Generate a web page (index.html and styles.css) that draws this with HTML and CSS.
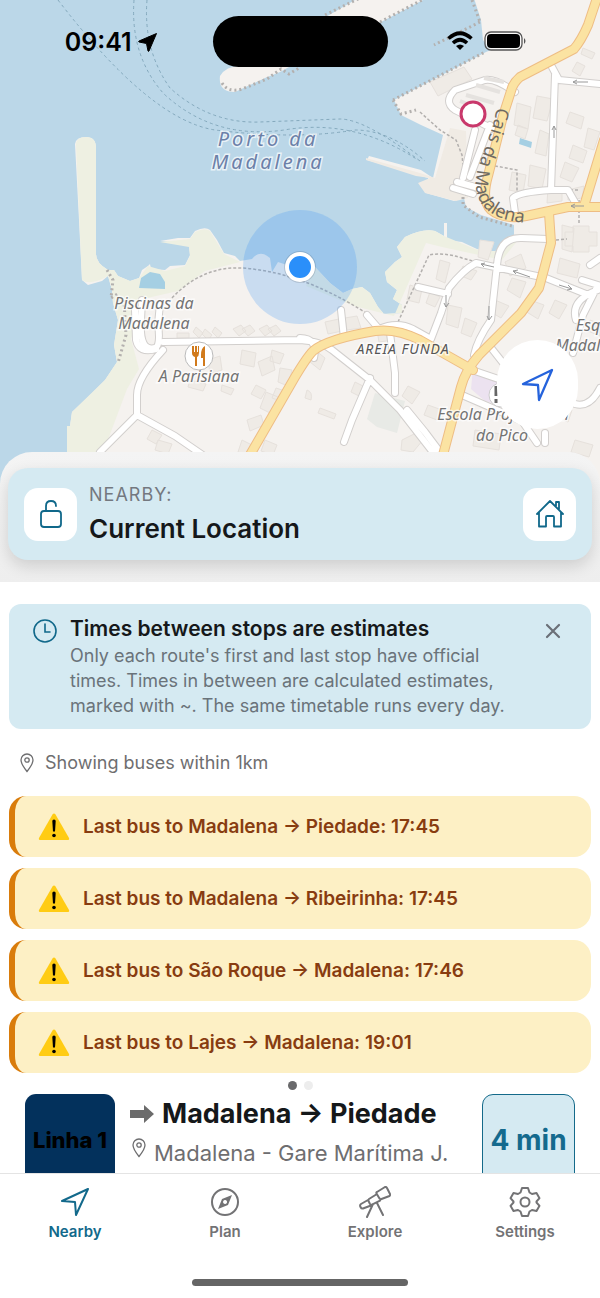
FILE: index.html
```html
<!DOCTYPE html>
<html lang="en">
<head>
    <meta charset="UTF-8">
    <meta name="viewport" content="width=device-width, initial-scale=1.0">
    <title>Nearby buses</title>
    <link rel="stylesheet" href="styles.css">
</head>
<body>
    <div class="app">
        <section class="map" aria-label="Map">
            <svg class="map-canvas" viewBox="0 0 600 500" preserveAspectRatio="xMidYMin slice">
                <!-- Land -->
                <path class="land" d="M67 500V426h3l2-14 18-17 15-15 12-18-3-17 4-25-5-17-1-13-4-14-6 5-14 4-6-5-3-60-4-76Q76 137 86 137T96 148v106q0 9 12 16l6 0 4 6 12 5 9-3 3-8 6-4 2-2 1 5 14 1 5-4 15-1 5-10-1-9-6-3-23-2 18-3 12 0 5-7q10-5 15-1l7 10 7 13 11 3 5 5 12-2q8-10 18-1l2 14 6-10 12 4 25 1 15 16 13 10 9-4 10-2 8 6 8 14 6 7 18-1v-8l-9-6 4-9-10-8-2-10 10-10 7-5-5-10 8-10q18-9 30-6l9 5V223l3 0v17l15 2 15 7q12 4 25 1l12-7V225l-33-10-15-8-2-9-10 3-28-8-7-10 10-1-1-4-61-18 2-4 52 14 12 8 3-13 7-30-22-10-20-10-7-15 92-48 5-2-8-10-2-20-8-25H600V500Z"/>
                <path class="land" d="M220 76q6-10 20-10L300 32l55-32h68l-42 22-47 20-54 30-15 6-30 14q-17 0-15-16Z"/>
                <path class="shore" d="M76 145Q76 137 86 137T96 148v106q0 9 12 16l6 0 4 6 12 5 9-3 9-12 17 5 20-5 5-10-1-9-29-5 30-3 5-7q10-5 15-1l14 23 16 8-35 9-27 20-35 8-12 40 8 30-12 20-30 80H67V426h3l2-14 33-32 12-18-3-17 4-25-5-17-1-13-4-14q-18 10-26 4Z"/>
                <path class="shore" d="M315 267l15 16 13 10 9-4 10-2 8 6 8 14 6 7 18-1v-8l-9-6 4-9-10-8-2-10 10-10 7-5-5-10 8-10q18-9 30-6l9 5 31 13q12 4 25 1l12-7 0-5 10-3-20 25-60-13-16-4-32 73-40-10-48-20Z"/>
                <path class="water" d="M139 288l2-10 9-6 10 2 5 8v7Z"/>
                <path class="pier" d="M366 158l54 15 15 5 15-50 16 3 2 67-12 3-31-8-7-10 12-5-14-2-50-16Z"/>
                <path class="lot" d="M375 393l30 8-8 32-20-6-10-8Z"/>
                <path class="school" d="M473 368l24 8 6 30-18-5-14-12Z"/>
                <path class="water" d="M520 138l12 4-1 6-12-4Z"/>

                <!-- Buildings -->
                <path class="building" d="M430 82l34-15 8 12-34 17ZM517 103l14 4-3 22-14-4ZM537 96l16 3-6 22-14-3ZM518 125l10 4-3 10-10-4ZM540 130l9 4-3 22-11-3ZM512 172l14 3-3 18-14-3ZM530 165l16 4-4 20-14-3ZM570 112l14 5-3 12-15-6ZM588 128l12 4-6 18-10-3ZM573 145l14 6-4 12-14-5ZM565 162l14 6-7 14-12-5ZM583 48l12 5-3 6-11-5ZM577 62l8 4-5 10-8-5ZM568 190l16-4-2 12-14 2ZM548 188l14-1v14l-15 2ZM562 225l12 3-2 24-10-3ZM565 232h8v-6h16v6h8v14h-8v6h-16v-6h-8ZM560 258l20 6-3 14-20-5ZM440 260l10 3-5 20-9-4ZM463 266l14 5-6 9-12-5ZM480 240l14 2-6 18-10-3ZM505 262l16-8 5 14-16 8ZM512 278l14 4-6 16-13-8ZM495 300l14 6-8 12-12-7ZM410 285l12 4-3 14-12-3ZM430 292l10 5-5 10-9-4ZM448 305l14 3-4 20-12-4ZM465 318l12 5-6 14-10-4ZM377 330l12-2 4 12-14 2ZM345 318l12-2 4 12-14 2ZM315 350l10 8-5 12-10-8ZM355 382l8 4-4 10-8-4ZM408 386l12 6-8 12-10-8ZM320 408l16 6-2 5-16-6ZM307 390q6 2 4 10l-6-2ZM402 440l16-8 5 8-10 12-12-2ZM428 405l14 5-5 10-13-5ZM475 430l26 4-2 16-26-4ZM560 405l12 5-4 12-12-5ZM575 440l18 5-4 12-18-5ZM530 300l14 5-6 14-13-8ZM555 300l12 5-8 14-10-6Z"/>
                <path class="building" d="M196 327l7 6-4 5-6-6ZM205 329l7 6-4 5-6-6ZM215 327l7 6-4 5-6-6ZM233 329l8-4 5 6-7 5ZM242 329l8-4 5 6-7 5ZM259 329l8-4 5 6-7 5ZM268 329l8-4 5 6-7 5ZM177 333h12v5h-12ZM242 350l14 3-2 14-14-3ZM258 362l14-6 3 14-13 6ZM272 350l12 4-4 10-10-3ZM280 368l12 2-4 16-10-4ZM256 385l10 5-5 9-10-5ZM266 392l12 5-8 16-10-5ZM276 388l12 4-5 10-11-4ZM247 420l14-5 3 10-14 6ZM242 440l10 5-4 10-10-3ZM152 430l10 5-6 9-9-5ZM158 440l14 4-4 10-13-4ZM190 380l16 4-3 7-15-4ZM208 360l12-4 2 14-12 4ZM222 385l12 4-3 6-10-4ZM325 322l14-3 3 12-14 3ZM590 320l10 4v12l-12-5ZM265 440l12 5-4 10-12-4Z"/>

                <!-- Footpaths and ferry lines -->
                <path class="footpath" d="M172 298q30-32 70-30 60 4 124 45M398 322l31-67q14-3 33 3l18 5M490 165l27 5v28M556 240l11-1M579 200v25M560 190h20M420 112l20 18 16 10 6 15 4 42"/>
                <path class="wall" d="M107 270l6 10-2 18 8-5M124 300l2 35-8 28M222 83q6 10 20 6l25-10 14-10 8 5 10-6M325 15l35-17M380 22l42-22M393 100l8 14 15-4M393 100l92-48M480 22l-46 23M472 0l8 22M463 197v8l16 12 33 9"/>
                <path class="ferry" d="M58 0q92 120 157 130 80 10 140 0 35 0 70 31M134 0q-4 56 30 94 50 46 120 36 70-12 134 30M147 0q-4 50 23 88 40 36 90 34l80-3q25 0 80 42"/>

                <!-- Streets -->
                <g class="road-edge">
                    <path id="streets" d="M142 300l-1 20q-2 32 14 28 6-2 3-24l2-20M135 310l1 30q3 14 20 9M163 350q-26 28-26 45l0 20-37 37M163 342l137-2q20 1 32 10l38 30 30 30 35 45M137 415l38 21 35 24M300 338q18 0 14 20M341 310l3 28M367 315l12 14q18-8 34 0l18 10 10-26 8-25q14-18 27-25l70 15 45 18M418 287l30 7M390 333l5 40v20M370 378l-18 42-8 22M497 265l-6 55q-14 20-17 35M497 265q2-28 25-27l26 1M515 92q-20-14-30-12l-30 10q-12 12 0 20l40 20M555 75l-4 115q-32 2-38 8l2 15M551 190h17l8 14M552 67l7 13 41 4M475 130l-12 48M490 125l-20 52M457 182l22 6M453 188l20 6M472 370l50 17-30-38M462 395l60 26 15 22M583 315l15-30-16-5M583 315l-10 38M590 265l10-7M598 290q-28 10-22 30M440 452l-15-20-18-22M575 404q15 4 25-16M545 433v10"/>
                </g>
                <use href="#streets" class="road-fill"/>
                <g class="main-edge">
                    <path id="mains" d="M598-5l-10 30q-7 16-14 24l-54 28q-7 6-9 14l-8 25-15 60q-7 25 3 34 12 10 35 6l42-9h35M604 140l-20 66M549 213l2 30-12 45-18 25-42 42q-14 16-18 32l-18 68M473 370l-53-30q-24-12-45-9-48 8-62 20-6 6-18 26l-48 83"/>
                </g>
                <use href="#mains" class="main-fill"/>
                <path class="parking" d="M484 78l20 4M476 85l24 7M466 95l28 8M460 101l10 4"/>
                <path class="oneway" d="M588 82h-15m4-2-4 2 4 2M554 138v-12m-2 4 2-4 2 4M584 206h-13m4-2-4 2 4 2M494 267l-13-3m4-1-4 1 3 3M530 277l-17-6m5-1-5 1 3 3M559 285l13 4m-4-4 4 4-5 1M446 295v12m-2-4 2 4 3-4M489 306v14m-2-4 2 4 3-4"/>

                <!-- Place names -->
                <g class="label label-sea">
                    <text x="268" y="146">Porto da</text>
                    <text x="268" y="169">Madalena</text>
                </g>
                <g class="label">
                    <text x="154" y="309">Piscinas da</text>
                    <text x="154" y="329">Madalena</text>
                    <text x="199" y="382">A Parisiana</text>
                    <text x="588" y="331">Esq</text>
                    <text x="591" y="351">Madalena</text>
                    <text x="503" y="420">Escola Profissional</text>
                    <text x="502" y="441">do Pico</text>
                </g>
                <text class="label label-area" x="403" y="354">AREIA FUNDA</text>
                <path id="cais" fill="none" d="M497 107C490 145 474 165 476 188 480 215 503 224 545 223"/>
                <text class="label-street"><textPath href="#cais">Cais da Madalena</textPath></text>

                <!-- Markers -->
                <circle cx="199" cy="356" r="14" fill="#fff" stroke="#bbb"/>
                <path d="M192 346v7q0 3 3 4v9h2v-9q2-1 2-4v-7h-1v6h-1v-6h-2v6h-1v-6ZM205 346q-4 2-4 9v3h2v8h2Z" fill="#d17a1c"/>
                <circle cx="501" cy="395" r="12" fill="#fff" stroke="#ccc"/>
                <path d="M496 386v10m0 3v4" stroke="#666" stroke-width="3"/>
                <circle cx="473" cy="114" r="12" fill="#fff" stroke="#c9386b" stroke-width="3"/>
                <circle cx="300" cy="267" r="57" fill="#2e8df7" fill-opacity=".22"/>
                <circle cx="300" cy="267" r="16" fill="#000" fill-opacity=".12"/>
                <circle cx="300" cy="267" r="13" fill="#2a8ffa" stroke="#fff" stroke-width="4"/>
            </svg>

            <header class="status-bar">
                <div class="status-time">
                    <span>09:41</span>
                    <svg width="20" height="20" viewBox="0 0 20 20"><path d="M18.500 1.500 1 9q-.8.800 0 1l7.500 1.500L10 19q.5.800 1 0Z" stroke="#000" stroke-linejoin="round"/></svg>
                </div>
                <div class="island"></div>
                <div class="status-icons">
                    <svg width="26" height="20" viewBox="0 0 26 20" fill="none" stroke="#000" stroke-width="3.600">
                        <path d="M1.500 7.500q11.500-10.500 23 0M6 12q7-6.500 14 0"/>
                        <path d="M13 19l-4-4q4-3 8 0Z" fill="#000" stroke="none"/>
                    </svg>
                    <svg width="43" height="20" viewBox="0 0 43 20">
                        <rect x="1" y="1" width="37" height="18" rx="6" fill="#fff" fill-opacity=".6" stroke="#555" stroke-width="1.300"/>
                        <rect x="3" y="3" width="33" height="14" rx="4"/>
                        <path d="M40 7q3 3 0 6Z" fill="#555"/>
                    </svg>
                </div>
            </header>

            <button class="locate" type="button" aria-label="Show my position">
                <svg width="36" height="36" viewBox="0 0 36 36" fill="none" stroke="#2563dc" stroke-width="2.300" stroke-linejoin="round"><path d="M32 3 3 17l15 1 1 15Z"/></svg>
            </button>
        </section>

        <section class="sheet">
            <div class="place">
                <button class="place-button" type="button" aria-label="Lock location">
                    <svg width="32" height="32" viewBox="0 0 32 32" fill="none" stroke="#10688a" stroke-width="1.800" stroke-linecap="round"><rect x="6" y="13" width="20" height="16" rx="3"/><path d="M11 13V8q0-5 5-5t5 5"/></svg>
                </button>
                <div class="place-text">
                    <p class="place-label">NEARBY:</p>
                    <h1>Current Location</h1>
                </div>
                <button class="place-button" type="button" aria-label="Home">
                    <svg width="32" height="32" viewBox="0 0 32 32" fill="none" stroke="#10688a" stroke-width="1.800" stroke-linecap="round" stroke-linejoin="round"><path d="M3 16 16 3l13 13M5 14v14.500h7V19q0-1 1-1h6q1 0 1 1v9.500h7V14M22 8V4h3v7"/></svg>
                </button>
            </div>
        </section>

        <main class="content">
            <section class="notice">
                <svg class="notice-icon" width="24" height="24" viewBox="0 0 24 24" fill="none" stroke="#10688a" stroke-width="1.600" stroke-linecap="round"><circle cx="12" cy="12" r="11"/><path d="M12 5v8h5"/></svg>
                <div class="notice-text">
                    <h2>Times between stops are estimates</h2>
                    <p>Only each route's first and last stop have official times. Times in between are calculated estimates, marked with ~. The same timetable runs every day.</p>
                </div>
                <button class="notice-close" type="button" aria-label="Close">
                    <svg width="16" height="16" viewBox="0 0 16 16" stroke="#6b7078" stroke-width="2.200" stroke-linecap="round"><path d="M2 2l12 12M14 2 2 14"/></svg>
                </button>
            </section>

            <p class="range">
                <svg width="14" height="20" viewBox="0 0 14 20" fill="none" stroke="#6e6e70" stroke-width="1.300"><path d="M7 18.500Q1 11 1 7a6 6 0 0 1 12 0q0 4-6 11.500Z"/><circle cx="7" cy="7" r="2.200"/></svg>
                Showing buses within 1km
            </p>

            <svg class="symbols" aria-hidden="true">
                <symbol id="warning" viewBox="0 0 32 28">
                    <path d="M14.500 1.500q1.500-2 3 0L31 25q.6 2-1 2H2q-1.600 0-1-2Z" fill="#ffcc14"/>
                    <path d="M14.300 8q0-1.600 1.700-1.600T17.700 8L17 18.500h-2Z"/><circle cx="16" cy="22.500" r="1.800"/>
                </symbol>
            </svg>
            <ul class="alerts">
                <li class="alert"><svg width="32" height="28"><use href="#warning"/></svg>Last bus to Madalena → Piedade: 17:45</li>
                <li class="alert"><svg width="32" height="28"><use href="#warning"/></svg>Last bus to Madalena → Ribeirinha: 17:45</li>
                <li class="alert"><svg width="32" height="28"><use href="#warning"/></svg>Last bus to São Roque → Madalena: 17:46</li>
                <li class="alert"><svg width="32" height="28"><use href="#warning"/></svg>Last bus to Lajes → Madalena: 19:01</li>
            </ul>

            <div class="departures">
                <div class="dots"><span class="dot active"></span><span class="dot"></span></div>
                <article class="departure">
                    <div class="line-badge">Linha 1</div>
                    <div class="departure-text">
                        <h3>
                            <svg width="24" height="20" viewBox="0 0 24 20" fill="#6b6b6b"><path d="M0 6h14V1l10 9-10 9v-5H0Z"/></svg>
                            Madalena → Piedade
                        </h3>
                        <p>
                            <svg width="14" height="20" viewBox="0 0 14 20" fill="none" stroke="#6e6e70" stroke-width="1.300"><path d="M7 18.500Q1 11 1 7a6 6 0 0 1 12 0q0 4-6 11.500Z"/><circle cx="7" cy="7" r="2.200"/></svg>
                            Madalena - Gare Marítima J.
                        </p>
                    </div>
                    <div class="wait">4 min</div>
                </article>
            </div>
        </main>

        <footer class="bottom">
            <nav class="tabs">
                <a class="tab current" href="#nearby">
                    <svg width="32" height="32" viewBox="0 0 32 32"><path d="M29 3 3 15l13 1 1 13Z"/></svg>
                    Nearby
                </a>
                <a class="tab" href="#plan">
                    <svg width="32" height="32" viewBox="0 0 32 32"><circle cx="16" cy="16" r="13"/><path fill="#737375" fill-rule="evenodd" stroke="none" d="M23 9l-4 10-10 4 4-10ZM16 14a2 2 0 1 0 .1 0Z"/></svg>
                    Plan
                </a>
                <a class="tab" href="#explore">
                    <svg width="32" height="32" viewBox="0 0 32 32"><path d="M18 6l8-5q1-.5 2 1l3 6q.5 1-.5 2l-8 3q-1 .5-2-.5l-3-5Q17 6.500 18 6ZM18 8l-8 5q-1 .7-.5 2l1.500 3q.7 1 2 .6l8-4M9 14l-7 4q-1.500 1-.5 3t2.500 1.500l8-3M14 18 8 31M18 17l6 12"/></svg>
                    Explore
                </a>
                <a class="tab" href="#settings">
                    <svg width="32" height="32" viewBox="0 0 32 32"><path d="M13 2h6l1.500 4.500 2.500 1.500 4.500-1 3 5.200-3 3.300v1l3 3.300-3 5.200-4.500-1-2.500 1.500L19 30h-6l-1.500-4.500L9 24l-4.500 1-3-5.200 3-3.300v-1l-3-3.300 3-5.200L9 8l2.500-1.500Z"/><circle cx="16" cy="16" r="4.500"/></svg>
                    Settings
                </a>
            </nav>
            <div class="home-indicator"></div>
        </footer>
    </div>
</body>
</html>
```
FILE: styles.css
```css
/* General Reset */
* {
    box-sizing: border-box;
    margin: 0;
    padding: 0;
}

body {
    font-family: Inter, "Liberation Sans", sans-serif;
    background-color: #fff;
    color: #15181a;
}

button {
    border: none;
    cursor: pointer;
    display: flex;
    align-items: center;
    justify-content: center;
}

svg {
    display: block;
    flex: none;
}

.symbols {
    position: absolute;
    width: 0;
    height: 0;
}

.app {
    display: flex;
    flex-direction: column;
    height: 100vh;
}

/* Map */
.map {
    position: relative;
    flex: none;
    height: 500px;
    background-color: #bbd7e8;
    overflow: hidden;
}

.map-canvas {
    width: 100%;
    height: 100%;
}

.land { fill: #f5f2ef; }
.shore { fill: #eef0e2; }
.water { fill: #a5cfe3; }
.pier { fill: #f0ebe4; }
.lot { fill: #e8eae6; }
.school { fill: #ece2f0; }

.building {
    fill: #efebe6;
    stroke: #e6e1dc;
}

.footpath, .wall, .ferry, .oneway {
    fill: none;
    stroke: #b3b0ae;
    stroke-width: 1.5;
    stroke-dasharray: 3 2;
}

.wall {
    stroke-width: 3;
    stroke-dasharray: 2 3;
}

.ferry {
    stroke: #84a9bd;
    stroke-width: 1;
    stroke-dasharray: 3 3;
}

.oneway {
    stroke: #999;
    stroke-width: 1;
    stroke-dasharray: none;
}

.road-edge, .road-fill, .main-edge, .main-fill {
    fill: none;
    stroke-linecap: round;
    stroke-linejoin: round;
}

/* Inherited by the path inside the group, and by the one <use> draws */
.road-edge {
    stroke: #d2cfcd;
    stroke-width: 8;
}

.road-fill {
    stroke: #fff;
    stroke-width: 6;
}

.main-edge {
    stroke: #eebd84;
    stroke-width: 10;
}

.main-fill {
    stroke: #fbe3a2;
    stroke-width: 8;
}

.parking {
    fill: none;
    stroke: #e5e2df;
    stroke-width: 4;
}

.label {
    font-family: "Noto Sans", sans-serif;
    font-style: italic;
    font-size: 16px;
    text-anchor: middle;
    fill: #737373;
    stroke: #fff;
    stroke-opacity: .7;
    stroke-width: 3px;
    paint-order: stroke;
}

.label-sea {
    font-size: 20px;
    letter-spacing: 3px;
    fill: #6c80a8;
}

.label-area {
    font-size: 14px;
    letter-spacing: 1px;
    fill: #555;
}

.label-street {
    font-family: "Noto Sans", sans-serif;
    font-size: 18px;
    fill: #6f6a62;
}

.locate {
    position: absolute;
    right: 22px;
    top: 340px;
    width: 81px;
    height: 89px;
    border-radius: 41px;
    background-color: #fff;
}

/* Status bar */
.status-bar {
    position: absolute;
    top: 16px;
    left: 0;
    right: 0;
    display: grid;
    grid-template-columns: 1fr 175px 1fr;
    align-items: center;
}

.status-time, .status-icons {
    display: flex;
    align-items: center;
    justify-content: center;
    gap: 6px;
    font-size: 25px;
    font-weight: 600;
    color: #000;
}

.status-time {
    padding-left: 10px;
}

.status-icons {
    gap: 11px;
    padding-right: 14px;
    padding-bottom: 2px;
}

.island {
    height: 51px;
    border-radius: 26px;
    background-color: #000;
}

/* Sheet with the current place */
.sheet {
    position: relative;
    flex: none;
    margin-top: -48px;
    padding: 16px 8px 22px;
    border-radius: 32px 32px 0 0;
    background: linear-gradient(#f4f4f4, #eeeeee);
    overflow: hidden;
}

.place {
    display: flex;
    align-items: center;
    gap: 12px;
    height: 92px;
    padding: 0 16px;
    border-radius: 20px;
    background-color: #d5eaf2;
    box-shadow: 0 6px 16px rgba(0, 0, 0, 0.14);
}

.place-button {
    flex: none;
    width: 53px;
    height: 53px;
    border-radius: 14px;
    background-color: #fff;
}

.place-text {
    flex: 1;
    padding-top: 4px;
}

.place-label {
    font-size: 18px;
    line-height: 26px;
    letter-spacing: 1px;
    color: #74787f;
}

h1 {
    font-size: 26px;
    line-height: 42px;
    font-weight: 600;
}

/* Scrolling list */
.content {
    flex: 1;
    min-height: 0;
    padding: 22px 9px 0;
    overflow: hidden;
}

.notice {
    display: flex;
    align-items: flex-start;
    padding: 11px 24px 11px;
    border-radius: 12px;
    background-color: #d5eaf2;
}

.notice-icon {
    margin-top: 4px;
}

.notice-text {
    flex: 1;
    padding: 0 12px 0 13px;
}

h2 {
    font-size: 21px;
    line-height: 28px;
    font-weight: 600;
}

.notice p {
    font-size: 18px;
    line-height: 25px;
    color: #6a737a;
}

.notice-close {
    width: 28px;
    height: 32px;
    background: none;
}

.range {
    display: flex;
    align-items: center;
    gap: 11px;
    padding: 0 11px;
    height: 67px;
    font-size: 18px;
    color: #6e6e70;
}

.alerts {
    display: grid;
    gap: 11px;
    list-style: none;
}

.alert {
    display: flex;
    align-items: center;
    gap: 13px;
    height: 61px;
    padding-left: 23px;
    border-left: 6px solid #d97c0b;
    border-radius: 17px;
    background-color: #fdf0c5;
    font-size: 19px;
    font-weight: 600;
    color: #883c10;
}

.departures {
    padding: 8px 16px 0;
}

.dots {
    display: flex;
    justify-content: center;
    gap: 7px;
}

.dot {
    width: 9px;
    height: 9px;
    border-radius: 50%;
    background-color: #ededed;
}

.dot.active {
    background-color: #69696b;
}

.departure {
    display: flex;
    margin-top: 4px;
}

.line-badge, .wait {
    flex: none;
    display: flex;
    align-items: center;
    justify-content: center;
    width: 90px;
    height: 92px;
    border-radius: 11px;
    background-color: #03315c;
    font-size: 22px;
    font-weight: 800;
    color: #000;
}

.wait {
    width: 93px;
    border: 1px solid #146a8a;
    background-color: #d5eaf2;
    font-size: 28px;
    font-weight: 700;
    color: #146a8e;
}

.departure-text {
    flex: 1;
    padding-left: 15px;
    white-space: nowrap;
}

h3 {
    display: flex;
    align-items: center;
    gap: 8px;
    font-size: 27px;
    line-height: 40px;
    font-weight: 700;
}

.departure-text p {
    display: flex;
    gap: 8px;
    padding-left: 2px;
    font-size: 22px;
    line-height: 38px;
    color: #6e6e70;
}

.departure-text p svg {
    margin-top: 4px;
}

/* Bottom navigation */
.bottom {
    flex: none;
    height: 125px;
    border-top: 1px solid #e4e4e4;
    background-color: #fff;
}

.tabs {
    display: grid;
    grid-template-columns: repeat(4, 1fr);
    padding-top: 12px;
}

.tab {
    display: flex;
    flex-direction: column;
    align-items: center;
    gap: 4px;
    font-size: 15px;
    line-height: 20px;
    font-weight: 600;
    color: #737375;
    text-decoration: none;
}

.tab svg {
    fill: none;
    stroke: #737375;
    stroke-width: 2;
    stroke-linejoin: round;
    stroke-linecap: round;
}

.tab.current {
    color: #12698b;
}

.tab.current svg {
    stroke: #12698b;
}

.home-indicator {
    width: 36%;
    height: 7px;
    margin: 37px auto 0;
    border-radius: 4px;
    background-color: #656565;
}
```
